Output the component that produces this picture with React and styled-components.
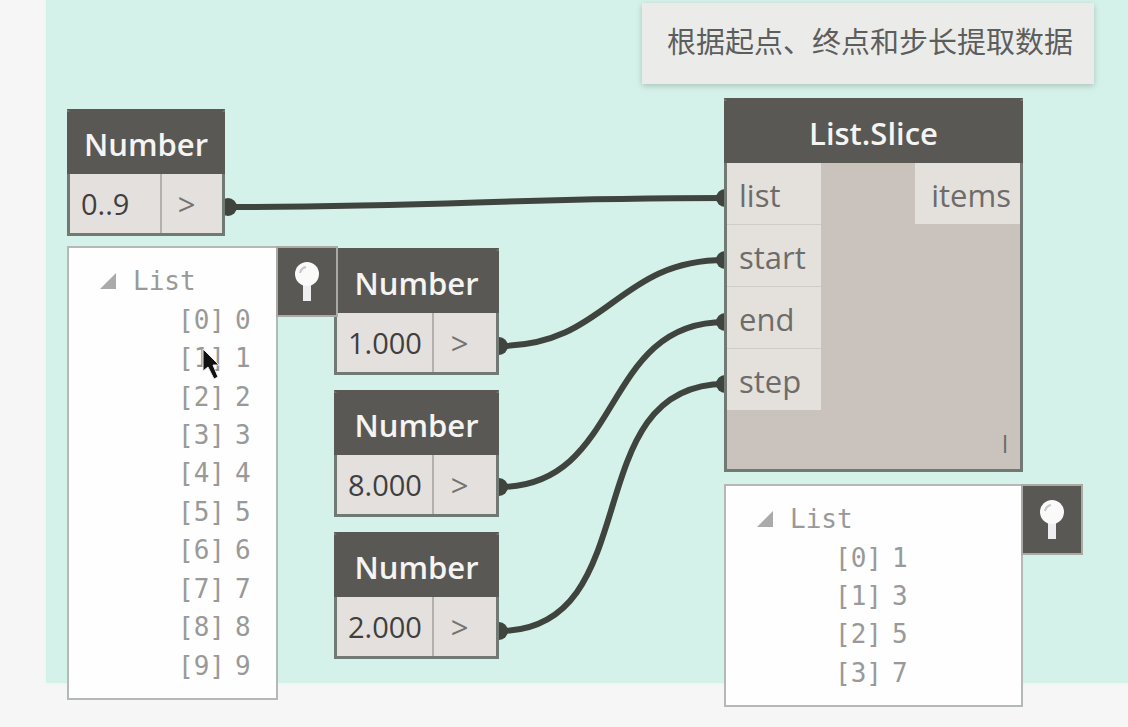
import React from "react";
import styled, { createGlobalStyle } from "styled-components";

const GlobalStyle = createGlobalStyle`
  * { box-sizing: border-box; }
  body { margin: 0; background: #f6f6f6; }
  button, input { font: inherit; color: inherit; }
`;

const Canvas = styled.main`
  position: relative;
  min-height: 100vh;
  overflow: hidden;
  background: #f6f6f6;
  font-family: "Open Sans", "Noto Sans CJK SC", sans-serif;
  font-size: 29px;
`;

const Group = styled.section`
  position: absolute;
  left: 46px;
  right: 0;
  top: 0;
  height: 683px;
  background: #d5f2ea;
  box-shadow: 0 0 4px #e2f4ee;
`;

const Wires = styled.svg`
  position: absolute;
  left: 0;
  top: 0;
  width: 1128px;
  height: 727px;
  fill: none;
  stroke: #3f443f;
  stroke-width: 6;
  pointer-events: none;

  circle { fill: #3f443f; stroke: none; }
`;

const Note = styled.p`
  position: absolute;
  left: 642px;
  top: 3px;
  margin: 0;
  padding: 15px 21px 22px 25px;
  background: #ebecea;
  box-shadow: 0 2px 6px #a9c3ba;
  color: #5c5e5d;
  font-family: "Noto Sans CJK SC", sans-serif;
  font-weight: 400;
  line-height: 44px;
  white-space: nowrap;
`;

const Placed = styled.article`
  position: absolute;
  left: ${(p) => p.$x}px;
  top: ${(p) => p.$y}px;
  width: ${(p) => p.$w}px;
`;

const NodeBox = styled(Placed)`
  background: #cac3bd;
  border: 3px solid #707973;
  border-top-color: #595855;
`;

const NodeTitle = styled.h2`
  margin: 0 -3px;
  padding-top: 2px;
  background: #595855;
  color: #f4f4f2;
  font-size: 31px;
  font-weight: 600;
  line-height: 60px;
  text-align: center;
`;

const NumberBody = styled.div`
  display: flex;
  height: 59px;
  background: #e4e0dd;
`;

const NumberInput = styled.input`
  flex: 1;
  min-width: 0;
  padding: 0 0 1px 11px;
  border: 0;
  border-right: 2px solid #b2b0ad;
  background: transparent;
  color: #3f3f3f;
  outline: none;
`;

const OutButton = styled.button`
  width: ${(p) => p.$w}px;
  padding: 0 11px 0 0;
  border: 0;
  background: transparent;
  color: #747370;
  font-size: 31px;
  text-align: center;
`;

const SliceBody = styled.div`
  display: flex;
  justify-content: space-between;
  align-items: flex-start;
`;

const Ports = styled.div`
  display: flex;
  flex-direction: column;
  gap: 1px;
  background: #cfcbc7;
`;

const Port = styled.button`
  width: ${(p) => p.$w}px;
  height: 61px;
  padding: 2px 9px 0 12px;
  border: 0;
  background: #e4e0dc;
  color: #6d6c6a;
  font-size: 31px;
  text-align: ${(p) => p.$align || "left"};
`;

const Lacing = styled.footer`
  padding: 18px 12px 9px;
  color: #6e6c69;
  font-size: 24px;
  line-height: 32px;
  text-align: right;
`;

const PreviewBox = styled(Placed)`
  height: ${(p) => p.$h}px;
  padding: 14px 0 13px;
  border: 2px solid #b4b9b6;
  background: #fdfefd;
  color: #999;
  font-family: "DejaVu Sans Mono", monospace;
  font-size: 26px;
`;

const Tree = styled.div`
  display: flex;
  flex-direction: column;
  height: 100%;
`;

const Row = styled.div`
  display: flex;
  flex: 1;
  align-items: center;
  gap: 10px;
  padding-left: ${(p) => p.$indent}px;
  line-height: 38px;
`;

const Toggle = styled.button`
  display: flex;
  align-items: center;
  gap: 17px;
  padding: 0;
  border: 0;
  background: transparent;

  svg { width: 16px; height: 16px; fill: #aaa; }
`;

const PinButton = styled.button`
  position: absolute;
  left: 100%;
  top: -2px;
  display: grid;
  place-items: center;
  width: 62px;
  height: 71px;
  padding: 0;
  border: 2px solid #a9aaa5;
  background: #595855;

  svg { width: 28px; height: 42px; }
`;

const Cursor = styled.svg`
  position: absolute;
  left: 199px;
  top: 345px;
  width: 24px;
  height: 38px;
  pointer-events: none;
`;

function NumberNode({ x, y, w, value, port }) {
  return (
    <NodeBox $x={x} $y={y} $w={w}>
      <NodeTitle>Number</NodeTitle>
      <NumberBody>
        <NumberInput aria-label="Number value" defaultValue={value} />
        <OutButton $w={port} aria-label="Number output">&gt;</OutButton>
      </NumberBody>
    </NodeBox>
  );
}

function Preview({ x, y, w, h, indent, items }) {
  return (
    <PreviewBox $x={x} $y={y} $w={w} $h={h}>
      <Tree>
        <Row $indent={31}>
          <Toggle aria-expanded="true">
            <svg viewBox="0 0 16 16"><path d="M16 0V16H0Z" /></svg>
            List
          </Toggle>
        </Row>
        {items.map((value, i) => (
          <Row key={i} $indent={indent}>
            <span>[{i}]</span>
            <span>{value}</span>
          </Row>
        ))}
      </Tree>
      <PinButton aria-label="Pin preview">
        <svg viewBox="0 0 28 42">
          <path d="M14 20V40" stroke="#eeeef0" strokeWidth="8" />
          <circle cx="14" cy="13" r="12" fill="#fafafa" />
          <path d="M7 12Q8 7 13 6" stroke="#c6c8c8" strokeWidth="2" fill="none" />
        </svg>
      </PinButton>
    </PreviewBox>
  );
}

const wires = [
  [228, 207, 725, 198],
  [499, 346, 725, 260],
  [499, 487, 725, 322],
  [499, 631, 725, 384],
];

const numbers = [
  { x: 67, y: 109, w: 158, value: "0..9", port: 60 },
  { x: 334, y: 248, w: 165, value: "1.000", port: 62 },
  { x: 334, y: 390, w: 165, value: "8.000", port: 62 },
  { x: 334, y: 532, w: 165, value: "2.000", port: 62 },
];

export default function App() {
  return (
    <>
      <GlobalStyle />
      <Canvas>
        <Group aria-label="Node group" />
        <Note>根据起点、终点和步长提取数据</Note>
        <Wires viewBox="0 0 1128 727" aria-hidden="true">
          {wires.map(([x1, y1, x2, y2]) => {
            // The bend grows with the straight-line distance between the two ports.
            const bend = Math.hypot(x2 - x1, y2 - y1) * 0.45;
            return (
              <g key={y1}>
                <path d={`M${x1} ${y1}C${x1 + bend} ${y1} ${x2 - bend} ${y2} ${x2} ${y2}`} />
                <circle cx={x1} cy={y1} r="9" />
                <circle cx={x2} cy={y2} r="9" />
              </g>
            );
          })}
        </Wires>
        {numbers.map((n) => <NumberNode key={n.y} {...n} />)}
        <NodeBox $x={724} $y={98} $w={299}>
          <NodeTitle>List.Slice</NodeTitle>
          <SliceBody>
            <Ports>
              {["list", "start", "end", "step"].map((name) => (
                <Port key={name} $w={94}>{name}</Port>
              ))}
            </Ports>
            <Port $w={105} $align="right">items</Port>
          </SliceBody>
          <Lacing>l</Lacing>
        </NodeBox>
        <Preview x={67} y={246} w={211} h={454} indent={109} items={[0, 1, 2, 3, 4, 5, 6, 7, 8, 9]} />
        <Preview x={724} y={484} w={299} h={223} indent={109} items={[1, 3, 5, 7]} />
        <Cursor viewBox="0 0 24 38" aria-hidden="true">
          <path d="M4 4V26L9 22L15 34L19 32L14 20H20Z" fill="#111" stroke="#eee" strokeWidth="1" />
        </Cursor>
      </Canvas>
    </>
  );
}
